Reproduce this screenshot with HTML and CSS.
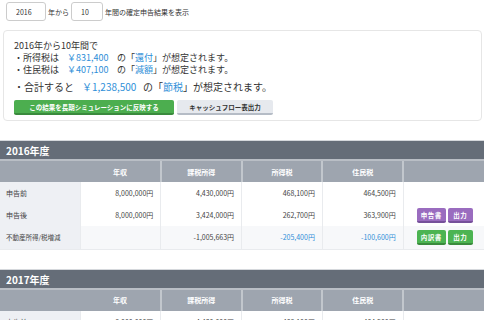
FILE: index.html
```html
<!DOCTYPE html>
<html lang="ja">

<head>
    <meta charset="UTF-8">
    <meta name="viewport" content="width=device-width, initial-scale=1.0">
    <link rel="stylesheet" href="styles.css">
</head>

<body>
    <div class="range-form">
        <input type="text" class="year-input" value="2016">
        <span>年から</span>
        <input type="text" class="span-input" value="10">
        <span>年間の確定申告結果を表示</span>
    </div>

    <div class="summary">
        <p class="summary-title">2016年から10年間で</p>
        <p class="summary-line"><span class="item">・所得税は</span><span class="amount">￥831,400</span><span>の「<em>還付</em>」が想定されます。</span></p>
        <p class="summary-line"><span class="item">・住民税は</span><span class="amount">￥407,100</span><span>の「<em>減額</em>」が想定されます。</span></p>
        <p class="summary-total"><span class="item">・合計すると</span><span class="amount">￥1,238,500</span><span>の「<em>節税</em>」が想定されます。</span></p>
        <div class="summary-actions">
            <button class="btn btn-green">この結果を長期シミュレーションに反映する</button>
            <button class="btn btn-gray">キャッシュフロー表出力</button>
        </div>
    </div>

    <div class="year-block">
        <div class="year-title">2016年度</div>
        <table class="result-table">
            <colgroup>
                <col class="c-label"><col><col><col><col><col>
            </colgroup>
            <thead>
                <tr>
                    <th></th>
                    <th>年収</th>
                    <th>課税所得</th>
                    <th>所得税</th>
                    <th>住民税</th>
                    <th></th>
                </tr>
            </thead>
            <tbody>
                <tr>
                    <td class="label">申告前</td>
                    <td>8,000,000円</td>
                    <td>4,430,000円</td>
                    <td>468,100円</td>
                    <td>464,500円</td>
                    <td></td>
                </tr>
                <tr>
                    <td class="label">申告後</td>
                    <td>8,000,000円</td>
                    <td>3,424,000円</td>
                    <td>262,700円</td>
                    <td>363,900円</td>
                    <td class="actions"><span class="tag tag-purple">申告書</span><span class="tag tag-purple">出力</span></td>
                </tr>
                <tr class="diff">
                    <td class="label small">不動産所得/税増減</td>
                    <td></td>
                    <td>-1,005,663円</td>
                    <td class="minus">-205,400円</td>
                    <td class="minus">-100,600円</td>
                    <td class="actions"><span class="tag tag-green">内訳書</span><span class="tag tag-green">出力</span></td>
                </tr>
            </tbody>
        </table>
    </div>

    <div class="year-block">
        <div class="year-title">2017年度</div>
        <table class="result-table">
            <colgroup>
                <col class="c-label"><col><col><col><col><col>
            </colgroup>
            <thead>
                <tr>
                    <th></th>
                    <th>年収</th>
                    <th>課税所得</th>
                    <th>所得税</th>
                    <th>住民税</th>
                    <th></th>
                </tr>
            </thead>
            <tbody>
                <tr>
                    <td class="label">申告前</td>
                    <td>8,000,000円</td>
                    <td>4,430,000円</td>
                    <td>468,100円</td>
                    <td>464,500円</td>
                    <td></td>
                </tr>
            </tbody>
        </table>
    </div>
</body>

</html>
```

FILE: styles.css
```css
* {
    margin: 0;
    padding: 0;
    box-sizing: border-box;
}

body {
    font-family: 'Noto Sans CJK JP', 'Noto Sans', sans-serif;
    background: #fff;
    color: #333;
    width: 484px;
    overflow: hidden;
}

.range-form {
    display: flex;
    align-items: center;
    gap: 2px;
    padding: 2px 6px 0;
    font-size: 7px;
    height: 21px;
}

.range-form input {
    height: 19px;
    border: 1px solid #ccc;
    border-radius: 3px;
    font-family: inherit;
    font-size: 7px;
    color: #333;
    padding-left: 9px;
    background: #fff;
}

.year-input {
    width: 40px;
}

.span-input {
    width: 32px;
}

.summary {
    margin: 9px 2px 0 3px;
    border: 1px solid #e6e6e6;
    border-radius: 4px;
    padding: 9px 10px 5px;
    height: 91px;
}

.summary p {
    white-space: nowrap;
}

.summary-title,
.summary-line {
    font-size: 9px;
    line-height: 12px;
}

.summary em {
    font-style: normal;
    color: #2f8fd8;
}

.summary .amount {
    color: #2f8fd8;
    display: inline-block;
}

.summary-line .item {
    display: inline-block;
    width: 53px;
}

.summary-line .amount {
    width: 50px;
}

.summary-total {
    font-size: 10px;
    line-height: 14px;
    margin-top: 4px;
}

.summary-total .item {
    display: inline-block;
    width: 68px;
}

.summary-total .amount {
    width: 61px;
}

.summary-actions {
    display: flex;
    gap: 3px;
    margin-top: 6px;
}

.btn {
    border: none;
    border-radius: 2px;
    font-family: inherit;
    font-size: 6.5px;
    font-weight: 700;
    height: 15px;
    padding: 0 6px;
}

.btn-green {
    width: 160px;
    background: #4cae4f;
    color: #fff;
    border-bottom: 2px solid #3a8a3d;
}

.btn-gray {
    width: 96px;
    background: #e6e9ee;
    color: #333;
    border-bottom: 2px solid #b5bcc6;
}

.year-block {
    margin-top: 19px;
    border-top: 1px solid #d5d8dc;
}

.year-title {
    background: #656d78;
    color: #fff;
    font-size: 10px;
    font-weight: 700;
    height: 20px;
    line-height: 20px;
    padding-left: 6px;
    border-bottom: 2px solid #b9bec5;
}

.result-table {
    width: 484px;
    border-collapse: collapse;
    table-layout: fixed;
    font-size: 7px;
}

.c-label {
    width: 80px;
}

.result-table th {
    background: #9ea5af;
    color: #fff;
    font-weight: 700;
    height: 21px;
    border-left: 2px solid #c2c7cd;
}

.result-table th:first-child,
.result-table th:nth-child(2) {
    border-left: none;
}

.result-table td {
    height: 22px;
    text-align: right;
    padding-right: 7px;
    border-left: 1px solid #e9ebee;
    color: #444;
}

.result-table td.label {
    text-align: left;
    padding-left: 6px;
    background: #eef0f4;
    border-left: none;
}

.result-table td.small {
    font-size: 6.5px;
}

.diff td {
    background: #f7f8fa;
    border-bottom: 1px solid #e9ebee;
    height: 23px;
}

.result-table td.minus {
    color: #2f8fd8;
}

.result-table td.actions {
    padding: 0 0 0 13px;
    text-align: left;
    white-space: nowrap;
}

.tag {
    display: inline-block;
    min-width: 25px;
    text-align: center;
    color: #fff;
    font-size: 6.5px;
    font-weight: 700;
    letter-spacing: 0.5px;
    height: 15px;
    line-height: 14px;
    padding: 0 4px;
    border-radius: 2px;
    margin-right: 2px;
    vertical-align: middle;
}

.tag-purple {
    background: #9a6cbf;
    border-bottom: 2px solid #76509a;
}

.tag-green {
    background: #4cb452;
    border-bottom: 2px solid #3a8a3d;
}
```
